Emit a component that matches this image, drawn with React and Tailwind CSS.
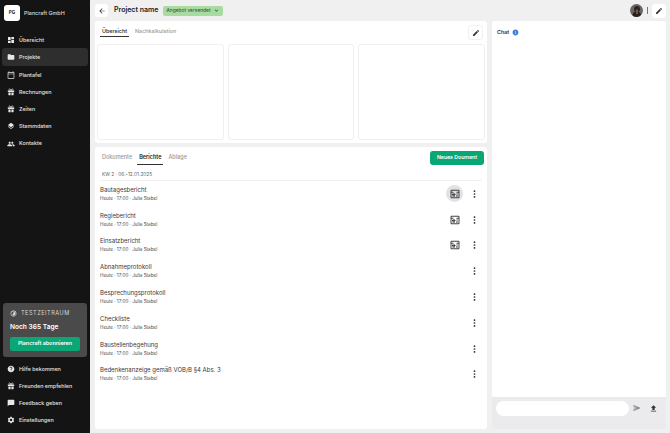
import React from 'react';
import {
  MdDashboard, MdFolder, MdOutlineCalendarToday, MdLayers, MdPeople, MdHelp, MdChatBubble,
  MdSettings, MdTimelapse, MdArrowBack, MdEdit, MdOutlineSend, MdFileUpload, MdExpandMore, MdInfo,
} from 'react-icons/md';

// gift box with bow, the packages only have wide variants
const GiftIcon = ({ size, className }) => (
  <svg width={size} height={size} viewBox="0 0 20 20" className={className} fill="currentColor">
    <path d="M2 6h16v4H2zM3.500 11H9v7H4.500a1 1 0 0 1-1-1zM11 11h5.500v6a1 1 0 0 1-1 1H11z" />
    <path d="M10 5.500C8 2 6.600 1.500 5.600 2.200 4.400 3 5 5 6.500 5.500zM10 5.500c2-3.500 3.400-4 4.400-3.300C15.600 3 15 5 13.500 5.500z" fill="none" stroke="currentColor" strokeWidth="1.600" />
  </svg>
);

const nav = [
  { label: 'Übersicht', icon: MdDashboard },
  { label: 'Projekte', icon: MdFolder, active: true },
  { label: 'Plantafel', icon: MdOutlineCalendarToday },
  { label: 'Rechnungen', icon: GiftIcon },
  { label: 'Zeiten', icon: GiftIcon },
  { label: 'Stammdaten', icon: MdLayers },
  { label: 'Kontakte', icon: MdPeople },
];

const footerNav = [
  { label: 'Hilfe bekommen', icon: MdHelp },
  { label: 'Freunden empfehlen', icon: GiftIcon },
  { label: 'Feedback geben', icon: MdChatBubble },
  { label: 'Einstellungen', icon: MdSettings },
];

const reports = [
  { title: 'Bautagesbericht', calc: true, hover: true },
  { title: 'Regiebericht', calc: true },
  { title: 'Einsatzbericht', calc: true },
  { title: 'Abnahmeprotokoll' },
  { title: 'Besprechungsprotokoll' },
  { title: 'Checkliste' },
  { title: 'Baustellenbegehung' },
  { title: 'Bedenkenanzeige gemäß VOB/B §4 Abs. 3' },
];

const ReportIcon = () => (
  <svg width="10" height="10" viewBox="0 0 20 20" fill="none" stroke="#2f2f2f">
    <path d="M2 2.500h16v15H2z" strokeWidth="1.800" />
    <path d="M2 6.500h5M13 6.500h5" strokeWidth="1.800" />
    <path d="M5 10h5v1.800H5zM5 14h5M13 10h2.500M12 14h3.500" strokeWidth="2" />
  </svg>
);

const MoreDots = () => (
  <svg width="3" height="8" viewBox="0 0 3 8" fill="#3a3a3a">
    <rect x="0.700" y="0.300" width="1.600" height="1.600" rx="0.500" />
    <rect x="0.700" y="3.200" width="1.600" height="1.600" rx="0.500" />
    <rect x="0.700" y="6.100" width="1.600" height="1.600" rx="0.500" />
  </svg>
);

const Avatar = () => (
  <svg width="13" height="13" viewBox="0 0 26 26">
    <clipPath id="av"><circle cx="13" cy="13" r="13" /></clipPath>
    <g clipPath="url(#av)">
      <rect width="26" height="26" fill="#6a6563" />
      <circle cx="14" cy="10" r="6" fill="#2a2524" />
      <path d="M4 26c1-9 5-11 10-11s8 3 9 11z" fill="#262222" />
      <rect x="12" y="11" width="4" height="9" fill="#8c4a3a" />
    </g>
  </svg>
);

const SideItem = ({ label, icon: Icon, active }) => (
  <div className={`flex items-center mx-[2px] rounded-[3px] pl-[5px] gap-[4px] ${active ? 'bg-[#2e2e2e] h-[18px]' : 'h-[17.200px]'}`}>
    <Icon size={8} className="text-[#e8e8e8] shrink-0" />
    <span className="text-[5.400px] font-medium text-[#e4e4e4]">{label}</span>
  </div>
);

const ReportRow = ({ title, calc, hover }) => (
  <div className="flex items-center h-[25.800px] pl-[3px] pr-[3px]">
    <div className="flex-1">
      <div className="text-[6px] leading-[8px] text-[#3a3a3a]">{title}</div>
      <div className="text-[4.600px] leading-[7px] mt-[1px] text-[#4a4a4a]">Heute · 17:00 · Julia Stabel</div>
    </div>
    {calc && (
      <div className={`w-[17px] h-[17px] rounded-full flex items-center justify-center ${hover ? 'bg-[#e2e2e6]' : ''}`}>
        <ReportIcon />
      </div>
    )}
    <div className="w-[16px] flex justify-center ml-[3px]">
      <MoreDots />
    </div>
  </div>
);

export default function App() {
  return (
    <div className="flex w-[670px] h-[433px] overflow-hidden bg-[#f0f0f0] font-['Inter',sans-serif]">
      <aside className="w-[90px] shrink-0 bg-[#141414] flex flex-col">
        <div className="flex items-center gap-[4px] pl-[4px] pt-[5px]">
          <div className="w-[16px] h-[16px] rounded-[3px] bg-white flex items-center justify-center text-[4.500px] font-bold text-[#222]">PG</div>
          <span className="text-[5.400px] font-medium text-[#dcdcdc]">Plancraft GmbH</span>
        </div>
        <nav className="mt-[10px] flex flex-col">
          {nav.map((n) => <SideItem key={n.label} {...n} />)}
        </nav>
        <div className="mt-auto mx-[3px] h-[54px] rounded-[3px] bg-[#4a4a4a] px-[7px] pt-[6px]">
          <div className="flex items-center gap-[4px] text-[5.600px] tracking-[0.500px] text-[#d8d8d8]">
            <MdTimelapse size={7} className="text-[#e8e8e8]" />
            TESTZEITRAUM
          </div>
          <div className="text-[6.600px] font-semibold text-white mt-[5px]">Noch 365 Tage</div>
          <div className="mt-[4px] h-[14px] rounded-[2px] bg-[#0aa675] flex items-center justify-center text-[5.400px] font-semibold text-white">Plancraft abonnieren</div>
        </div>
        <div className="mt-[3px] mb-[4px] flex flex-col">
          {footerNav.map((n) => <SideItem key={n.label} {...n} />)}
        </div>
      </aside>

      <div className="flex-1 flex flex-col min-w-0 pl-[5px] pr-[4px]">
        <header className="h-[21px] flex items-center shrink-0">
          <div className="w-[13px] h-[13px] rounded-[3px] bg-white flex items-center justify-center">
            <MdArrowBack size={8} className="text-[#333]" />
          </div>
          <span className="ml-[6px] text-[7px] font-semibold text-[#222]">Project name</span>
          <div className="ml-[5px] h-[10px] px-[3px] rounded-[2px] bg-[#a8dba1] flex items-center gap-[2px] text-[4.900px] text-[#2c4f2b]">
            Angebot versendet
            <MdExpandMore size={7} />
          </div>
          <div className="ml-auto flex items-center">
            <Avatar />
            <div className="w-px h-[7px] bg-[#777] mx-[4px]" />
            <div className="w-[14px] h-[14px] rounded-[3px] bg-white flex items-center justify-center">
              <MdEdit size={8} className="text-[#333]" />
            </div>
          </div>
        </header>

        <div className="flex-1 flex gap-[5px] pb-[4px] min-h-0">
          <main className="w-[392px] flex flex-col gap-[4px]">
            <section className="h-[122px] bg-white rounded-[3px] px-[2px] pb-[3px] flex flex-col">
              <div className="h-[23px] flex items-center pl-[3px] pr-[1px]">
                <div className="flex items-center gap-[6px] mb-[2px]">
                  <span className="text-[5.400px] font-medium text-[#222] h-[11px] flex items-center px-[2px] border-b border-[#333]">Übersicht</span>
                  <span className="text-[5.400px] font-medium text-[#999]">Nachkalkulation</span>
                </div>
                <div className="ml-auto mr-[1px] w-[15px] h-[15px] rounded-[3px] border border-[#f1f1f1] flex items-center justify-center">
                  <MdEdit size={8} className="text-[#333]" />
                </div>
              </div>
              <div className="flex-1 grid grid-cols-3 gap-[4px]">
                <div className="rounded-[3px] border border-[#f0f0f0]" />
                <div className="rounded-[3px] border border-[#f0f0f0]" />
                <div className="rounded-[3px] border border-[#f0f0f0]" />
              </div>
            </section>

            <section className="flex-1 bg-white rounded-[3px] px-[2px]">
              <div className="flex items-center h-[22px] pl-[5px] pr-[1px]">
                <div className="flex items-center gap-[5px] mb-[1px]">
                  <span className="text-[5.500px] font-medium text-[#999]">Dokumente</span>
                  <span className="text-[5.500px] font-semibold text-[#222] h-[14px] flex items-center px-[2px] border-b border-[#333]">Berichte</span>
                  <span className="text-[5.500px] font-medium text-[#999]">Ablage</span>
                </div>
                <div className="ml-auto w-[54px] h-[14px] rounded-[3px] bg-[#0aa675] flex items-center justify-center text-[5.200px] font-semibold text-white">Neues Doument</div>
              </div>
              <div className="ml-[3px] mr-[3px] h-[12px] flex items-center pl-[2px] pt-[1px] border-b border-[#f1f1f1] text-[4.800px] text-[#666]">KW 2 · 06.–12.01.2025</div>
              <div>
                {reports.map((r) => <ReportRow key={r.title} {...r} />)}
              </div>
            </section>
          </main>

          <aside className="flex-1 rounded-[3px] bg-[#ebebed] flex flex-col overflow-hidden">
            <div className="h-[376px] bg-white px-[5px] pt-[7px]">
              <div className="flex items-center gap-[3px] text-[5.400px] font-semibold text-[#333]">
                Chat
                <MdInfo size={7} className="text-[#3b82d6]" />
              </div>
            </div>
            <div className="flex-1 flex items-center pl-[4px] pr-[8px] pb-[10px]">
              <div className="w-[133px] h-[15px] rounded-full bg-white" />
              <MdOutlineSend size={8} className="ml-[4px] text-[#777]" />
              <MdFileUpload size={9} className="ml-[8px] text-[#333]" />
            </div>
          </aside>
        </div>
      </div>
    </div>
  );
}
